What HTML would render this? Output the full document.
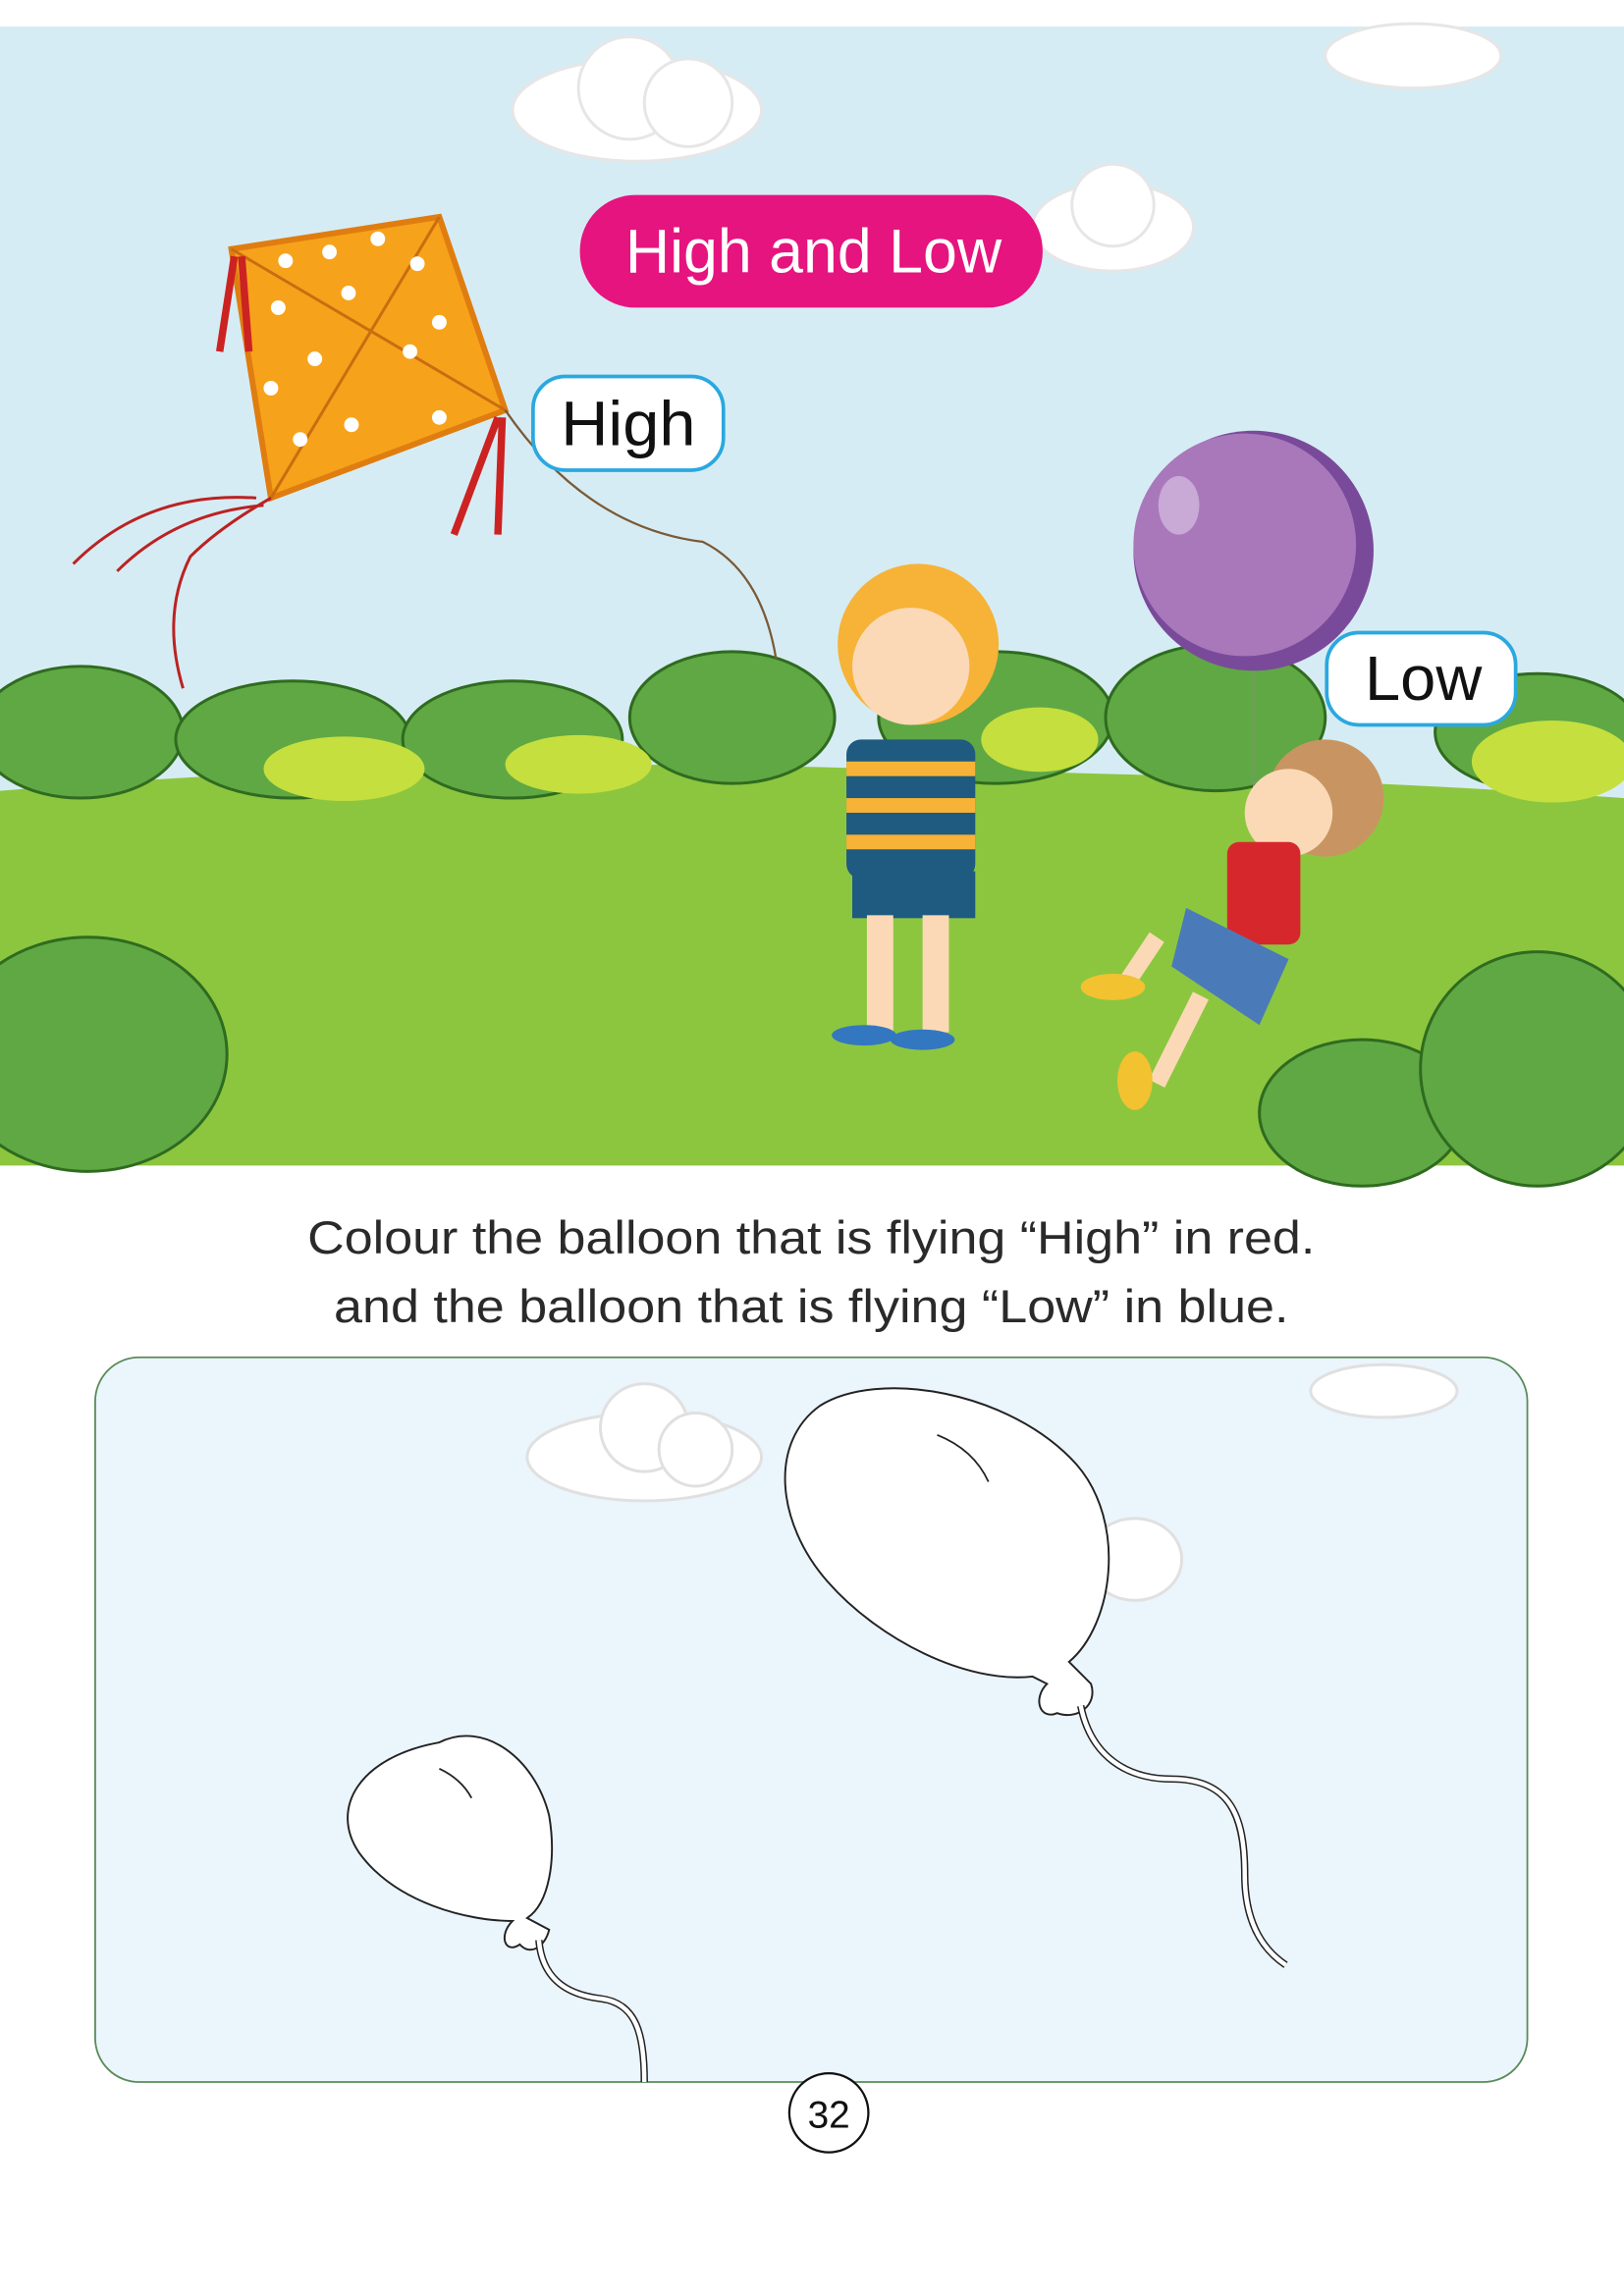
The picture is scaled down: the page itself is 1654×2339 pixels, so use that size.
<!DOCTYPE html>
<html><head><meta charset="utf-8"><style>
html,body{margin:0;padding:0;background:#fff;}
svg{display:block}
text{font-family:"Liberation Sans",sans-serif;}
</style></head><body>
<svg width="1654" height="2339" viewBox="0 0 1109 1568" xmlns="http://www.w3.org/2000/svg">
<rect width="1109" height="1568" fill="#fff"/>
<rect x="0" y="18" width="1109" height="778" fill="#d6ecf4"/>
<g fill="#fff" stroke="#e6e6e6" stroke-width="2">
<ellipse cx="435" cy="75" rx="85" ry="35"/><circle cx="430" cy="60" r="35"/><circle cx="470" cy="70" r="30"/>
<ellipse cx="760" cy="155" rx="55" ry="30"/><circle cx="760" cy="140" r="28"/>
<ellipse cx="965" cy="38" rx="60" ry="22"/>
</g>
<path d="M0 540 Q300 515 600 525 Q900 530 1109 545 L1109 796 L0 796Z" fill="#8cc63f"/>
<g fill="#5fa844" stroke="#2f6b1f" stroke-width="2">
<ellipse cx="55" cy="500" rx="70" ry="45"/><ellipse cx="200" cy="505" rx="80" ry="40"/><ellipse cx="350" cy="505" rx="75" ry="40"/>
<ellipse cx="500" cy="490" rx="70" ry="45"/><ellipse cx="680" cy="490" rx="80" ry="45"/><ellipse cx="830" cy="490" rx="75" ry="50"/>
<ellipse cx="1050" cy="500" rx="70" ry="40"/>
<ellipse cx="60" cy="720" rx="95" ry="80"/><ellipse cx="930" cy="760" rx="70" ry="50"/><ellipse cx="1050" cy="730" rx="80" ry="80"/>
</g>
<g fill="#c5df3e"><ellipse cx="235" cy="525" rx="55" ry="22"/><ellipse cx="395" cy="522" rx="50" ry="20"/><ellipse cx="710" cy="505" rx="40" ry="22"/><ellipse cx="1060" cy="520" rx="55" ry="28"/></g>
<path d="M158 170 L300 148 L345 280 L185 340Z" fill="#f7a21b" stroke="#e07d10" stroke-width="4"/>
<path d="M158 170 L345 280 M300 148 L185 340" stroke="#c96d10" stroke-width="2"/>
<g fill="#fff"><circle cx="195" cy="178" r="5"/><circle cx="225" cy="172" r="5"/><circle cx="258" cy="163" r="5"/><circle cx="285" cy="180" r="5"/><circle cx="190" cy="210" r="5"/><circle cx="238" cy="200" r="5"/><circle cx="300" cy="220" r="5"/><circle cx="215" cy="245" r="5"/><circle cx="280" cy="240" r="5"/><circle cx="185" cy="265" r="5"/><circle cx="300" cy="285" r="5"/><circle cx="205" cy="300" r="5"/><circle cx="240" cy="290" r="5"/></g>
<path d="M345 280 Q400 360 480 370 Q520 390 530 450" stroke="#7a5a36" stroke-width="1.5" fill="none"/>
<path d="M185 340 Q150 360 130 380 Q110 420 125 470 M180 345 Q120 350 80 390 M175 340 Q100 335 50 385" stroke="#b22" stroke-width="2" fill="none"/>
<path d="M160 175 L150 240 M165 175 L170 240 M340 285 L310 365 M343 285 L340 365" stroke="#c22" stroke-width="5"/>
<circle cx="856" cy="376" r="82" fill="#7a4a9a"/><circle cx="850" cy="372" r="76" fill="#a878bb"/><ellipse cx="805" cy="345" rx="14" ry="20" fill="#c9a9d6"/>
<path d="M856 458 L856 560" stroke="#888" stroke-width="1"/>
<ellipse cx="627" cy="440" rx="55" ry="55" fill="#f6b337"/><circle cx="622" cy="455" r="40" fill="#fcd9b6"/>
<rect x="578" y="505" width="88" height="95" rx="10" fill="#1f5a80"/>
<g fill="#f6b337"><rect x="578" y="520" width="88" height="10"/><rect x="578" y="545" width="88" height="10"/><rect x="578" y="570" width="88" height="10"/></g>
<rect x="582" y="595" width="84" height="32" fill="#1f5a80"/>
<rect x="592" y="625" width="18" height="80" fill="#fcd9b6"/><rect x="630" y="625" width="18" height="80" fill="#fcd9b6"/>
<ellipse cx="590" cy="707" rx="22" ry="7" fill="#3377c0"/><ellipse cx="630" cy="710" rx="22" ry="7" fill="#3377c0"/>
<circle cx="905" cy="545" r="40" fill="#c89562"/><circle cx="880" cy="555" r="30" fill="#fcd9b6"/>
<rect x="838" y="575" width="50" height="70" rx="8" fill="#d6282c"/>
<path d="M810 620 L880 655 L860 700 L800 660Z" fill="#4a7bb8"/>
<path d="M790 640 L770 670 M820 680 L790 740" stroke="#fcd9b6" stroke-width="12"/>
<ellipse cx="760" cy="674" rx="22" ry="9" fill="#f2c230"/><ellipse cx="775" cy="738" rx="12" ry="20" fill="#f2c230"/>
<rect x="396" y="133" width="316" height="77" rx="38" fill="#e6147e"/>
<text x="427" y="186" font-size="42" fill="#fff" textLength="257" lengthAdjust="spacingAndGlyphs">High and Low</text>
<rect x="364" y="257" width="130" height="64" rx="22" fill="#fff" stroke="#2ba8df" stroke-width="2.5"/>
<text x="383" y="304" font-size="43" fill="#111" textLength="92" lengthAdjust="spacingAndGlyphs">High</text>
<rect x="906" y="432" width="129" height="63" rx="22" fill="#fff" stroke="#2ba8df" stroke-width="2.5"/>
<text x="932" y="478" font-size="43" fill="#111" textLength="80" lengthAdjust="spacingAndGlyphs">Low</text>
<text x="210" y="856" font-size="32" fill="#2a2a2a" textLength="688" lengthAdjust="spacingAndGlyphs">Colour the balloon that is flying “High” in red.</text>
<text x="228" y="903" font-size="32" fill="#2a2a2a" textLength="652" lengthAdjust="spacingAndGlyphs">and the balloon that is flying “Low” in blue.</text>
<rect x="65" y="927" width="978" height="495" rx="30" fill="#ebf5fc" stroke="#5a8a5a" stroke-width="1.2"/>
<g fill="#fff" stroke="#e0e0e0" stroke-width="2">
<ellipse cx="440" cy="995" rx="80" ry="30"/><circle cx="440" cy="975" r="30"/><circle cx="475" cy="990" r="25"/>
<ellipse cx="775" cy="1065" rx="32" ry="28"/>
<ellipse cx="945" cy="950" rx="50" ry="18"/>
</g>
<g fill="#fff" stroke="#222" stroke-width="1.3">
<path d="M560 960 C600 935 690 950 735 1000 C770 1040 760 1110 730 1135 L745 1150 C750 1165 735 1175 722 1170 C710 1175 705 1160 715 1150 L705 1145 C660 1150 600 1120 565 1080 C530 1040 525 985 560 960Z"/>
<path d="M300 1190 C330 1175 365 1200 375 1240 C380 1270 375 1300 360 1310 L375 1318 C372 1330 362 1336 355 1328 C345 1335 340 1322 350 1312 C320 1312 270 1300 245 1265 C225 1235 245 1200 300 1190Z"/>
</g>
<path d="M640 980 Q665 990 675 1012 M300 1208 Q315 1215 322 1228" stroke="#222" stroke-width="1.2" fill="#fff"/>
<path d="M738 1165 C745 1200 770 1215 800 1215 C840 1215 850 1240 850 1280 C850 1310 860 1330 878 1342" stroke="#222" stroke-width="5" fill="none"/>
<path d="M738 1165 C745 1200 770 1215 800 1215 C840 1215 850 1240 850 1280 C850 1310 860 1330 878 1342" stroke="#fff" stroke-width="3" fill="none"/>
<path d="M368 1325 C370 1350 385 1362 410 1365 C435 1368 440 1390 440 1422" stroke="#222" stroke-width="5" fill="none"/>
<path d="M368 1325 C370 1350 385 1362 410 1365 C435 1368 440 1390 440 1422" stroke="#fff" stroke-width="3" fill="none"/>
<circle cx="566" cy="1443" r="27" fill="#fff" stroke="#111" stroke-width="1.5"/>
<text x="566" y="1453" font-size="26" fill="#111" text-anchor="middle">32</text>
</svg>
</body></html>
